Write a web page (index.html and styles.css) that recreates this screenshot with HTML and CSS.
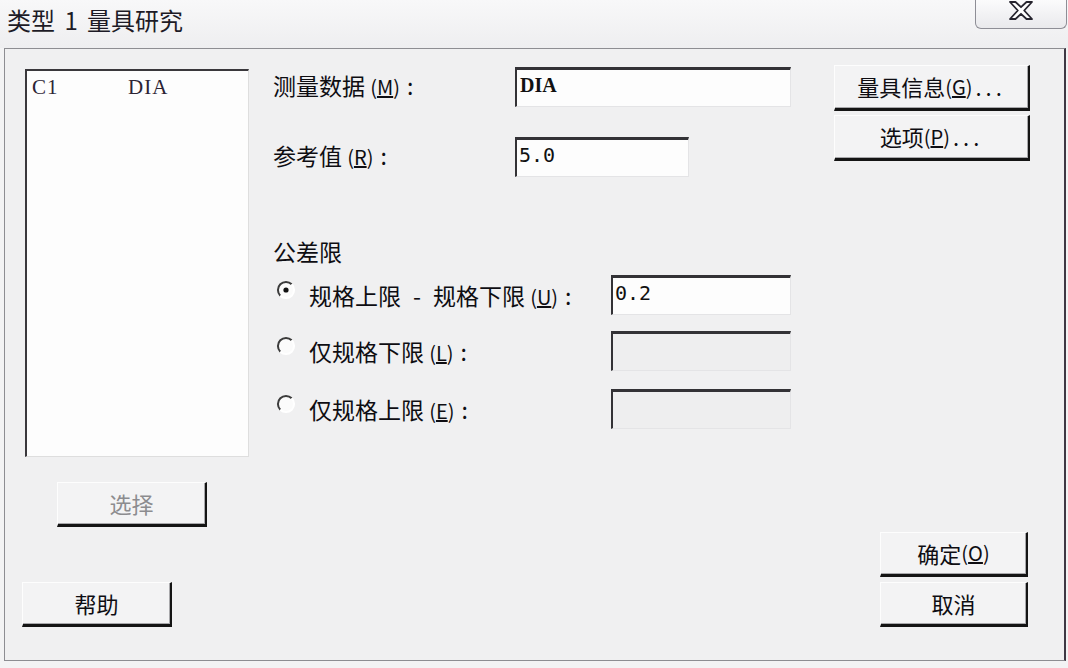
FILE: index.html
```html
<!DOCTYPE html>
<html lang="zh-CN">

<head>
    <meta charset="UTF-8">
    <meta name="viewport" content="width=device-width, initial-scale=1.0">
    <title>类型 1 量具研究</title>
    <link rel="stylesheet" href="styles.css">
</head>

<body>
    <div class="titlebar">
        <div class="title">类型 1 量具研究</div>
        <button class="close" type="button">
            <!-- outlined X glyph of the caption close button -->
            <svg width="24" height="19" viewBox="0 0 24 19">
                <polygon points="1,1 6.5,1 12,6.2 17.5,1 23,1 15.2,9.5 23,18 17.5,18 12,12.8 6.5,18 1,18 8.8,9.5"
                    fill="#ffffff" stroke="#26242e" stroke-width="1.8" stroke-linejoin="round" />
            </svg>
        </button>
    </div>

    <div class="dialog">
        <div class="top">
            <div class="listbox">
                <div class="list-item"><span class="col-name">C1</span><span>DIA</span></div>
            </div>

            <div class="fields">
                <div class="row">
                    <div class="label">测量数据 <span class="key">(<u>M</u>)</span><span class="colon">:</span></div>
                    <div class="edit wide serif">DIA</div>
                </div>
                <div class="row row-ref">
                    <div class="label">参考值 <span class="key">(<u>R</u>)</span><span class="colon">:</span></div>
                    <div class="edit short">5.0</div>
                </div>

                <div class="group-label">公差限</div>

                <div class="radio-row first">
                    <svg class="radio" width="20" height="20" viewBox="0 0 20 20">
                        <circle cx="10" cy="10" r="7.5" fill="#fbfbfb" />
                        <path d="M4.3 15.7 A8 8 0 0 1 15.7 4.3" fill="none" stroke="#3c3c3c" stroke-width="2" />
                        <path d="M15.7 4.3 A8 8 0 0 1 4.3 15.7" fill="none" stroke="#ffffff" stroke-width="2" />
                        <circle cx="10" cy="10" r="2.6" fill="#111111" />
                    </svg>
                    <div class="label">规格上限<span class="dash">-</span>规格下限 <span class="key">(<u>U</u>)</span><span class="colon">:</span></div>
                    <div class="edit limit">0.2</div>
                </div>
                <div class="radio-row second">
                    <svg class="radio" width="20" height="20" viewBox="0 0 20 20">
                        <circle cx="10" cy="10" r="7.5" fill="#fbfbfb" />
                        <path d="M4.3 15.7 A8 8 0 0 1 15.7 4.3" fill="none" stroke="#3c3c3c" stroke-width="2" />
                        <path d="M15.7 4.3 A8 8 0 0 1 4.3 15.7" fill="none" stroke="#ffffff" stroke-width="2" />
                    </svg>
                    <div class="label">仅规格下限 <span class="key">(<u>L</u>)</span><span class="colon">:</span></div>
                    <div class="edit limit disabled"></div>
                </div>
                <div class="radio-row third">
                    <svg class="radio" width="20" height="20" viewBox="0 0 20 20">
                        <circle cx="10" cy="10" r="7.5" fill="#fbfbfb" />
                        <path d="M4.3 15.7 A8 8 0 0 1 15.7 4.3" fill="none" stroke="#3c3c3c" stroke-width="2" />
                        <path d="M15.7 4.3 A8 8 0 0 1 4.3 15.7" fill="none" stroke="#ffffff" stroke-width="2" />
                    </svg>
                    <div class="label">仅规格上限 <span class="key">(<u>E</u>)</span><span class="colon">:</span></div>
                    <div class="edit limit disabled"></div>
                </div>
            </div>

            <div class="side-buttons">
                <button class="btn side" type="button">量具信息 <span class="key">(<u>G</u>)</span><span class="dots">...</span></button>
                <button class="btn side" type="button">选项 <span class="key">(<u>P</u>)</span><span class="dots">...</span></button>
            </div>
        </div>

        <div class="select-row">
            <button class="btn small disabled-btn" type="button">选择</button>
        </div>

        <div class="bottom">
            <button class="btn small help" type="button">帮助</button>
            <div class="ok-cancel">
                <button class="btn small" type="button">确定 <span class="key">(<u>O</u>)</span></button>
                <button class="btn small" type="button">取消</button>
            </div>
        </div>
    </div>
</body>

</html>
```

FILE: styles.css
```css
* {
    box-sizing: border-box;
}

body {
    margin: 0;
    width: 1068px;
    height: 668px;
    overflow: hidden;
    background: #f3f3f4;
    font-family: "Noto Sans CJK SC", "Liberation Sans", sans-serif;
    color: #151418;
}

/* caption bar */
.titlebar {
    height: 48px;
    display: flex;
    align-items: flex-start;
    background: linear-gradient(#f8f8f9, #eeeef0);
}

.title {
    padding: 6px 0 0 7px;
    font-size: 24px;
    line-height: 28px;
    word-spacing: 4px;
    color: #1d1b26;
}

.close {
    margin-left: auto;
    margin-right: 1px;
    width: 92px;
    height: 29px;
    padding: 1px 0 0 0;
    border: 1px solid #8e8e96;
    border-top: none;
    border-radius: 0 0 6px 6px;
    background: linear-gradient(#fbfbfc, #e9e9ec);
    display: flex;
    align-items: flex-start;
    justify-content: center;
}

/* dialog body */
.dialog {
    margin-left: 4px;
    width: 1062px;
    height: 613px;
    border-left: 1px solid #8d8d92;
    border-top: 1px solid #8d8d92;
    border-right: 2px solid #3e3844;
    border-bottom: 1px solid #8d8d92;
    background: #f0f0f1;
}

.top {
    display: flex;
    align-items: flex-start;
}

.listbox {
    margin: 20px 0 0 20px;
    width: 224px;
    height: 388px;
    padding: 4px 0 0 5px;
    background: #fdfdfd;
    border-top: 2px solid #3a383c;
    border-left: 2px solid #3a383c;
    border-right: 1px solid #dedede;
    border-bottom: 1px solid #dedede;
    font-family: "Liberation Serif", serif;
    font-size: 21px;
    line-height: 24px;
    letter-spacing: 1px;
    color: #2c2434;
}

.col-name {
    display: inline-block;
    width: 96px;
}

/* middle column with the labels and edit boxes */
.fields {
    margin: 18px 0 0 24px;
    width: 518px;
}

.row {
    display: flex;
    align-items: flex-start;
    height: 40px;
}

.row-ref {
    margin-top: 30px;
}

.label {
    font-size: 23px;
    line-height: 36px;
    white-space: nowrap;
    color: #0e0d12;
}

.row .label {
    width: 242px;
}

.key {
    font-size: 20px;
}

.colon {
    margin-left: 7px;
}

.dash {
    margin: 0 12px;
}

.edit {
    height: 40px;
    padding: 3px 0 0 2px;
    background: #fdfdfd;
    border-top: 3px solid #333236;
    border-left: 2px solid #333236;
    border-right: 1px solid #e4e4e6;
    border-bottom: 1px solid #e4e4e6;
    font-family: "DejaVu Sans Mono", monospace;
    font-size: 20px;
    line-height: 24px;
    color: #111111;
}

.edit.serif {
    font-family: "Liberation Serif", serif;
    font-weight: bold;
    padding-left: 3px;
}

.wide {
    width: 276px;
}

.short {
    width: 174px;
}

.limit {
    width: 180px;
    margin-left: auto;
}

.edit.disabled {
    background: #eeeeef;
}

.group-label {
    margin-top: 59px;
    font-size: 23px;
    line-height: 30px;
    color: #0e0d12;
}

.radio-row {
    display: flex;
    align-items: flex-start;
    height: 40px;
}

.radio-row .label {
    margin-left: 13px;
    line-height: 40px;
}

.radio {
    margin: 5px 0 0 3px;
    flex-shrink: 0;
}

.first {
    margin-top: 9px;
}

.second {
    margin-top: 16px;
}

.third {
    margin-top: 18px;
}

/* push buttons */
.btn {
    display: flex;
    align-items: center;
    justify-content: center;
    padding: 0 0 2px 0;
    height: 45px;
    background: #f3f3f4;
    border-top: 1px solid #fdfdfd;
    border-left: 1px solid #fdfdfd;
    border-right: 2px solid #141414;
    border-bottom: 3px solid #141414;
    box-shadow: inset -1px -1px 0 #a8a8ab;
    font-family: "Noto Sans CJK SC", sans-serif;
    font-size: 22px;
    color: #0e0d12;
}

.side-buttons {
    margin: 16px 0 0 43px;
    display: flex;
    flex-direction: column;
    gap: 4px;
}

.btn.side {
    width: 196px;
    height: 46px;
}

.dots {
    margin-left: 3px;
    letter-spacing: 4px;
}

.btn.small {
    width: 150px;
}

.select-row {
    margin-top: 25px;
    padding-left: 52px;
}

.disabled-btn {
    color: #8c8c8f;
}

.bottom {
    margin-top: 5px;
    display: flex;
    align-items: flex-end;
    justify-content: space-between;
    padding: 0 36px 0 17px;
}

.ok-cancel {
    display: flex;
    flex-direction: column;
    gap: 5px;
}

.ok-cancel .btn {
    width: 148px;
}
```
